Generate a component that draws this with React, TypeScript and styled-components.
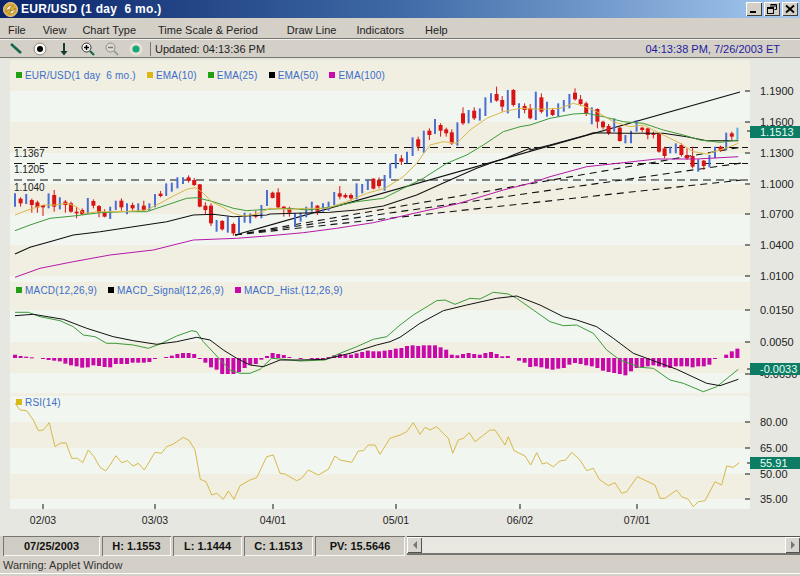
import styled, { createGlobalStyle } from 'styled-components'

const GlobalStyle = createGlobalStyle`
  html, body {
    margin: 0;
    padding: 0;
    background: #d4d0c8;
    overflow: hidden;
  }
`

const Window = styled.div`
  width: 800px;
  height: 576px;
  display: flex;
  flex-direction: column;
  background: #d4d0c8;
  font-family: 'Liberation Sans', Arial, sans-serif;
  overflow: hidden;
`

const TitleBar = styled.div`
  height: 18px;
  flex: none;
  display: flex;
  align-items: center;
  padding: 0 2px 0 3px;
  background: linear-gradient(90deg, #0a246a 0%, #3f6aa6 50%, #a6caf0 100%);
`

const TitleText = styled.div`
  margin-left: 3px;
  color: #fff;
  font-size: 12px;
  font-weight: bold;
  white-space: pre;
  letter-spacing: 0.3px;
  flex: 1;
`

const WinButton = styled.div`
  width: 16px;
  height: 14px;
  margin-left: 2px;
  background: #d4d0c8;
  box-shadow: inset 1px 1px 0 #fff, inset -1px -1px 0 #404040;
  display: flex;
  align-items: center;
  justify-content: center;
`

const MenuBar = styled.div`
  height: 21px;
  flex: none;
  display: flex;
  align-items: center;
  padding: 3px 0 0 8px;
  box-sizing: border-box;
  border-bottom: 1px solid #77756f;
  font-size: 11px;
  color: #222;
`

const MenuItem = styled.span<{ $left: number }>`
  margin-left: ${p => p.$left}px;
  white-space: nowrap;
`

const ToolBar = styled.div`
  height: 19px;
  flex: none;
  box-sizing: border-box;
  display: flex;
  align-items: center;
  border-top: 1px solid #f4f2ec;
  border-bottom: 1px solid #77756f;
  font-size: 11px;
  color: #222;
`

const ToolIcon = styled.div`
  width: 24px;
  height: 16px;
  flex: none;
  display: flex;
  align-items: center;
  justify-content: center;
`

const ToolIcons = styled.div`
  display: flex;
  padding-left: 4px;
`

const ToolSep = styled.div`
  width: 1px;
  height: 14px;
  margin: 0 4px 0 2px;
  background: #77756f;
`

const Clock = styled.div`
  margin-left: auto;
  margin-right: 20px;
  color: #1c1c9e;
  font-size: 11px;
`

const ChartArea = styled.div`
  flex: none;
  height: 478px;
  background: #e7e7e1;
  display: flex;
  flex-direction: column;
`

const Pane = styled.div<{ $h: number }>`
  position: relative;
  height: ${p => p.$h}px;
  flex: none;
  svg {
    display: block;
  }
  text {
    font-family: 'Liberation Sans', Arial, sans-serif;
    font-size: 11px;
    fill: #222;
  }
`

const FibText = styled.text`
  && {
    font-size: 10px;
  }
`

const DateText = styled.text`
  && {
    font-size: 10.5px;
  }
`

const Legend = styled.div<{ $top: number }>`
  position: absolute;
  left: 16px;
  top: ${p => p.$top}px;
  display: flex;
  gap: 11px;
  align-items: center;
  height: 12px;
  font-size: 10px;
  letter-spacing: 0.2px;
  color: #3c6cc8;
  white-space: pre;
`

const LegendItem = styled.span`
  display: flex;
  align-items: center;
  gap: 3px;
`

const Swatch = styled.i<{ $c: string }>`
  display: block;
  width: 6px;
  height: 6px;
  background: ${p => p.$c};
`

const Chip = styled.div<{ $top: number }>`
  position: absolute;
  left: 750px;
  right: 0;
  top: ${p => p.$top}px;
  height: 12px;
  line-height: 12px;
  padding-left: 10px;
  background: #0c7c64;
  color: #e8fff6;
  font-size: 11px;
`

const StatusRow = styled.div`
  height: 20px;
  flex: none;
  display: flex;
  align-items: stretch;
  padding-left: 3px;
`

const StatCell = styled.div<{ $w: number }>`
  width: ${p => p.$w}px;
  box-sizing: border-box;
  margin-right: 2px;
  flex: none;
  display: flex;
  align-items: center;
  justify-content: center;
  font-size: 11px;
  font-weight: bold;
  color: #111;
  background: #cfcdc3;
  box-shadow: inset 1px 1px 0 #77756f, inset -1px -1px 0 #f8f8f4;
`

const ScrollBar = styled.div`
  flex: 1;
  display: flex;
  height: 19px;
  background: #e8e8e0;
  border-top: 1px solid #55534e;
  box-sizing: border-box;
  border-bottom: 2px solid #77756f;
`

const ScrollTrack = styled.div`
  flex: 1;
`

const ScrollButton = styled.div`
  width: 15px;
  flex: none;
  background: #d8d6ce;
  box-shadow: inset 1px 1px 0 #fff, inset -1px -1px 0 #55534e;
  display: flex;
  align-items: center;
  justify-content: center;
`

const WarningBar = styled.div`
  height: 17px;
  flex: none;
  display: flex;
  align-items: center;
  padding-left: 3px;
  font-size: 11px;
  color: #333;
  border-bottom: 1px solid #fff;
`

// points were read off the screenshot at 3x, so every helper takes a crop origin
type P = [number, number]
const crop = (ox: number, oy: number, list: P[]): P[] => list.map(([x, y]) => [ox + x / 3, oy + y / 3])
const toPath = (list: P[]) => list.map(([x, y]) => `${x.toFixed(1)},${y.toFixed(1)}`).join(' ')

const ema10 = [
  ...crop(0, 90, [[45,375],[70,365],[100,355],[130,345],[165,345],[200,340],[230,350],[250,370],[300,365],[370,365],[440,360],[480,340],[520,318],[560,298],[585,293],[605,305],[635,335],[665,350],[700,370],[730,378],[770,372]]),
  ...crop(270, 80, [[0,385],[60,388],[110,385],[170,385],[230,365],[290,340],[345,325],[400,290],[440,250],[480,195],[520,185],[560,190],[600,150],[650,115],[700,95],[750,85]]),
  ...crop(530, 80, [[30,88],[90,85],[130,70],[160,78],[200,95],[250,125],[300,140],[340,135],[380,155],[410,170],[450,190],[490,215],[530,222],[570,210],[600,200],[625,190]]),
]
const ema25 = [
  ...crop(0, 90, [[45,422],[90,405],[150,385],[220,378],[300,368],[370,365],[440,365],[500,345],[560,325],[590,323],[640,335],[700,355],[740,362],[800,358]]),
  ...crop(270, 80, [[60,385],[110,390],[180,382],[260,365],[340,355],[400,325],[460,295],[530,250],[590,225],[640,195],[700,155],[750,140]]),
  ...crop(530, 80, [[0,135],[60,115],[130,102],[170,100],[220,110],[280,125],[340,130],[400,150],[460,165],[510,180],[570,187],[625,180]]),
]
const ema50 = [
  ...crop(0, 90, [[45,492],[90,472],[160,452],[220,435],[300,425],[400,410],[500,395],[580,375],[640,373],[700,380],[800,375]]),
  ...crop(270, 80, [[0,402],[180,397],[260,390],[340,378],[440,345],[540,300],[620,265],[680,243],[710,233],[780,205]]),
  ...crop(530, 80, [[0,210],[60,195],[170,165],[190,158],[280,160],[400,160],[470,170],[530,182],[625,182]]),
]
const ema100 = [
  ...crop(0, 90, [[45,562],[120,535],[220,515],[330,495],[460,480],[580,450],[710,445],[800,438]]),
  ...crop(270, 80, [[100,458],[200,445],[310,428],[440,398],[560,372],[700,330]]),
  ...crop(530, 80, [[0,310],[60,290],[170,260],[280,248],[380,237],[500,237],[625,230]]),
]

const macdLine = [
  ...crop(0, 280, [[45,97],[85,97],[120,110],[180,122],[220,140],[250,165],[285,170],[320,190],[345,190],[400,195],[445,205],[480,192],[530,168],[575,152],[590,155],[610,185],[650,228],[690,270],[720,280],[750,280],[780,268],[815,235],[850,238],[900,243],[975,240],[1020,220],[1070,200],[1120,178],[1160,170]]),
  ...crop(400, 280, [[0,135],[40,105],[110,62],[135,60],[165,73],[210,55],[240,57],[280,37],[325,42],[350,55],[400,90],[450,125],[490,137],[530,135],[580,160],[620,210],[660,240],[720,262],[760,265],[810,300],[850,310],[910,335],[950,320],[1015,268]]),
]
const signalLine = [
  ...crop(0, 280, [[45,107],[100,103],[190,118],[260,145],[340,170],[400,182],[470,193],[530,185],[590,172],[630,180],[670,210],[710,235],[750,255],[790,260],[840,240],[900,240],[975,238],[1050,220],[1130,195],[1170,185]]),
  ...crop(400, 280, [[0,172],[60,130],[130,92],[200,75],[290,55],[350,48],[420,75],[490,110],[530,120],[590,140],[640,175],[700,220],[760,242],[830,268],[920,310],[960,317],[1015,298]]),
]
const rsiLine = [
  ...crop(0, 390, [[45,40],[60,60],[80,62],[100,90],[115,122],[130,120],[148,98],[165,170],[180,160],[198,158],[215,205],[232,205],[248,218],[265,180],[282,200],[300,232],[317,243],[332,222],[348,197],[365,218],[382,212],[399,228],[415,220],[433,240],[465,187],[484,190],[500,170],[520,162],[550,142],[568,152],[585,180],[601,268],[618,275],[635,315],[650,310],[670,328],[685,303],[702,328],[720,287],[750,270],[770,263],[800,200],[820,195],[840,250],[855,252],[890,272],[905,265],[925,240],[955,255],[985,238],[1005,198],[1020,210],[1055,217],[1075,183],[1090,182],[1105,165],[1125,165],[1140,193],[1170,145]]),
  ...crop(400, 390, [[0,135],[20,125],[40,98],[60,133],[75,112],[90,120],[110,110],[145,145],[158,190],[175,150],[190,145],[208,128],[225,155],[270,120],[285,120],[315,165],[325,140],[342,182],[375,198],[392,225],[410,188],[427,222],[440,218],[460,230],[480,213],[497,210],[515,187],[540,210],[560,242],[580,235],[598,268],[625,287],[645,278],[665,310],[680,305],[712,260],[765,285],[780,325],[795,325],[830,300],[845,320],[865,328],[880,350],[895,335],[915,332],[945,275],[965,285],[980,228],[1000,232],[1018,218]]),
]

// one candle: wick top, wick bottom, and body top/bottom when it closed down (red)
type Candle = [number, number, number?, number?]
const firstCandles: Candle[] = [
  [310,350],[322,350,326,340],[312,342],[326,368,330,345],[332,368,337,352],[345,378,345,352],[310,355],[300,365,315,350],[322,358],[330,368,335,345],
  [335,368,340,365],[352,385,365,370],[355,375,360,373],[324,372],[328,355,333,347],[345,382,348,368],[358,382,368,380],[350,387],[332,360],[325,362,332,352],
  [340,373],[338,362,345,355],[340,365],[332,365,347,360],[340,362],[312,352],[303,322,311,318],[280,318],[278,305],[262,295],
  [262,282],[256,278,262,272],[264,288,270,285],[282,352,283,350],[337,372,347,360],[340,408,347,400],[390,425],[390,422,393,418],[380,428],[398,437,402,430],
  [382,430],[368,398],[370,400],[362,385,375,380],[345,385],[300,348],
]
const laterCandles: Candle[] = [
  [335,355,338,354],[325,385,337,382],[378,410,380,385],[380,410,385,398],[400,440],[398,425],[380,412],[365,395],[375,405,377,392],[370,395],
  [365,392],[336,375],[318,358,340,350],[340,355,345,352],[340,362,345,355],[310,358],[312,340],[298,330],[295,328,296,326],[292,325,300,318],
  [285,332],[250,295],[222,265],[225,255,235,245],[215,250],[172,228],[170,212,178,200],[152,218],[145,180,152,165],[117,162],
  [130,170,135,152],[143,170,148,160],[148,195,157,190],[127,197],[82,135,100,130],[90,130],[82,120,92,115],[85,122],[52,108],[40,68],
  [20,65,42,62],[48,95,60,80],[30,100],[27,80,30,75],[70,115],[70,100,78,90],[72,118,85,115],[35,120],
  [40,100,52,95],[65,110],[85,108,90,105],[70,110],[60,95],[42,85],[25,62,38,58],[45,78,58,72],[65,108,70,100],[82,133],
  [85,145,87,125],[122,148,125,142],[132,165,138,160],[115,155],[140,185,143,183],[165,190],[152,190],[120,155],[140,157,143,150],[143,178,145,165],
  [155,175,160,165],[158,218,160,215],[200,235,205,228],[200,220],[190,220],[190,230,195,225],[205,240,225,235],[200,265,228,260],[238,275],[240,270,242,258],
  [225,262],[200,235],[197,215,200,213],[158,210],[155,180,160,170],[143,178],
]
const candles: { x: number; y: (z: number) => number; c: Candle }[] = [
  ...firstCandles.map((c, i) => ({ x: 15 + 5.6 * i, y: (z: number) => 90 + z / 3, c })),
  ...laterCandles.map((c, i) => ({ x: 15 + 5.6 * (i + 46), y: (z: number) => 80 + z / 3, c })),
]

// histogram heights in 3x pixels, one per trading day
const hist = [
  10,6,4,2,0,-3,-6,-8,-10,-17,-22,-25,-29,-28,-22,-24,-27,-28,-18,-18,-18,-14,-14,-14,-12,-2,0,3,7,12,15,15,12,-2,-14,-28,-35,-48,-48,-48,-42,-30,-20,-18,-5,6,15,12,9,3,0,-2,0,-2,-2,-2,3,8,12,10,10,14,18,22,20,20,22,24,28,
  30,36,38,36,38,38,38,32,25,10,8,12,15,12,10,15,18,12,5,6,0,-8,-14,-27,-25,-28,-32,-35,-32,-30,-20,-15,-18,-22,-25,-30,-38,-42,-45,-48,-52,-40,-30,-28,-25,-22,-25,-28,-30,-25,-25,-25,-28,-25,-25,-20,-3,0,10,20,28,
]

const BEIGE = '#f0efe2'
const MINT = '#f1f6f0'

const Band = ({ y, h, c }: { y: number; h: number; c: string }) => <rect x={10} y={y} width={740} height={h} fill={c} />

const AxisLabel = ({ y, t, w = 10 }: { y: number; t: string; w?: number }) => (
  <>
    <line x1={745} x2={745 + w / 2} y1={y} y2={y} stroke="#111" />
    <text x={760} y={y + 4}>{t}</text>
  </>
)

const fanEnds = [147, 163, 180]
const fibLines = [
  { y: 147.5, t: '1.1367', ty: 157 },
  { y: 163.5, t: '1.1205', ty: 173 },
  { y: 180, t: '1.1040', ty: 191 },
]

const PricePane = () => (
  <Pane $h={224}>
    <svg width={800} height={224} viewBox="0 58 800 224">
      <Band y={60} h={31} c={BEIGE} />
      <Band y={91} h={31} c={MINT} />
      <Band y={122} h={31} c={BEIGE} />
      <Band y={153} h={31} c={MINT} />
      <Band y={184} h={30} c={BEIGE} />
      <Band y={214} h={31} c={MINT} />
      <Band y={245} h={31} c={BEIGE} />
      <Band y={276} h={6} c={MINT} />
      {fibLines.map(f => (
        <g key={f.t}>
          <line x1={14} x2={748} y1={f.y} y2={f.y} stroke="#111" strokeWidth={1.1} strokeDasharray="8 5" />
          <FibText x={14} y={f.ty}>{f.t}</FibText>
        </g>
      ))}
      {fanEnds.map(y => (
        <line key={y} x1={235} y1={235} x2={742} y2={y} stroke="#111" strokeWidth={1.1} strokeDasharray="7 5" />
      ))}
      <line x1={235} y1={235} x2={740} y2={92} stroke="#111" strokeWidth={1.1} />
      {candles.map(({ x, y, c }, i) => {
        const down = c[2] !== undefined
        const color = down ? '#d81414' : i === 129 ? '#58b0e0' : '#4c6ed4'
        return (
          <g key={i}>
            <line x1={x} x2={x} y1={y(c[0])} y2={y(c[1])} stroke={color} strokeWidth={down ? 1 : 2} />
            {down && <rect x={x - 2} y={y(c[2]!)} width={4} height={y(c[3]!) - y(c[2]!)} fill={color} />}
          </g>
        )
      })}
      <polyline points={toPath(ema100)} fill="none" stroke="#b818a8" strokeWidth={1} />
      <polyline points={toPath(ema50)} fill="none" stroke="#111" strokeWidth={1.1} />
      <polyline points={toPath(ema25)} fill="none" stroke="#3f9a3a" strokeWidth={1} />
      <polyline points={toPath(ema10)} fill="none" stroke="#d8b848" strokeWidth={1} />
      <AxisLabel y={91} t="1.1900" />
      <AxisLabel y={122} t="1.1600" />
      <AxisLabel y={153} t="1.1300" />
      <AxisLabel y={184} t="1.1000" />
      <AxisLabel y={214} t="1.0700" />
      <AxisLabel y={245} t="1.0400" />
      <AxisLabel y={276} t="1.0100" />
      <line x1={747} x2={750} y1={131} y2={131} stroke="#111" />
    </svg>
    <Legend $top={11}>
      <LegendItem><Swatch $c="#22a012" />{'EUR/USD(1 day  6 mo.)'}</LegendItem>
      <LegendItem><Swatch $c="#d8b818" />EMA(10)</LegendItem>
      <LegendItem><Swatch $c="#22a012" />EMA(25)</LegendItem>
      <LegendItem><Swatch $c="#000" />EMA(50)</LegendItem>
      <LegendItem><Swatch $c="#c808a8" />EMA(100)</LegendItem>
    </Legend>
    <Chip $top={68}>1.1513</Chip>
  </Pane>
)

const MacdPane = () => (
  <Pane $h={114}>
    <svg width={800} height={114} viewBox="0 282 800 114">
      <Band y={282} h={28} c={BEIGE} />
      <Band y={310} h={32} c={MINT} />
      <Band y={342} h={31} c={BEIGE} />
      <Band y={373} h={20} c={MINT} />
      <Band y={393} h={3} c={BEIGE} />
      {hist.map((v, i) => {
        const h = Math.abs(v) / 3
        const x = 13 + 5.6 * i
        if (h === 0) return null
        return <rect key={i} x={x} width={4} y={v > 0 ? 358 - h : 358} height={Math.max(h, 1)} fill="#c808a8" />
      })}
      <polyline points={toPath(macdLine)} fill="none" stroke="#3f9a3a" strokeWidth={1} />
      <polyline points={toPath(signalLine)} fill="none" stroke="#111" strokeWidth={1} />
      <AxisLabel y={310} t="0.0150" />
      <AxisLabel y={342} t="0.0050" />
      <AxisLabel y={374} t="-0.0050" />
      <line x1={747} x2={750} y1={369} y2={369} stroke="#111" />
    </svg>
    <Legend $top={2}>
      <LegendItem><Swatch $c="#22a012" />{'MACD(12,26,9)'}</LegendItem>
      <LegendItem><Swatch $c="#000" />{'MACD_Signal(12,26,9)'}</LegendItem>
      <LegendItem><Swatch $c="#c808a8" />{'MACD_Hist.(12,26,9)'}</LegendItem>
    </Legend>
    <Chip $top={81}>-0.0033</Chip>
  </Pane>
)

const dateTicks: [number, string][] = [[43, '02/03'], [155, '03/03'], [273, '04/01'], [396, '05/01'], [520, '06/02'], [637, '07/01']]

const RsiPane = () => (
  <Pane $h={140}>
    <svg width={800} height={140} viewBox="0 396 800 140">
      <Band y={396} h={26} c={MINT} />
      <Band y={422} h={26} c={BEIGE} />
      <Band y={448} h={26} c={MINT} />
      <Band y={474} h={25} c={BEIGE} />
      <Band y={499} h={10} c={MINT} />
      <polyline points={toPath(rsiLine)} fill="none" stroke="#d8b848" strokeWidth={1} />
      {dateTicks.map(([x, t]) => (
        <g key={t}>
          <line x1={x} x2={x} y1={504} y2={509} stroke="#111" />
          <DateText x={x} y={524} textAnchor="middle">{t}</DateText>
        </g>
      ))}
      <AxisLabel y={422} t="80.00" />
      <AxisLabel y={448} t="65.00" />
      <AxisLabel y={474} t="50.00" />
      <AxisLabel y={499} t="35.00" />
      <line x1={747} x2={750} y1={463} y2={463} stroke="#111" />
    </svg>
    <Legend $top={0}>
      <LegendItem><Swatch $c="#d8b818" />RSI(14)</LegendItem>
    </Legend>
    <Chip $top={61}>55.91</Chip>
  </Pane>
)

function App() {
  return (
    <Window>
      <GlobalStyle />
      <TitleBar>
        <svg width={15} height={15} viewBox="0 0 15 15">
          <circle cx={7.5} cy={7.5} r={7} fill="#d8a838" stroke="#f0d890" />
          <path d="M3 9.5 C3 5 7 3 10.5 4 C8 4.5 6.5 6 7 7.5 C8 10 11.5 8.5 12 6 C12.5 10.5 8.5 12.5 5.5 11.5 C7.5 11 8.5 9.5 7.5 8.2 C6.5 7 4 7.5 3 9.5 Z" fill="#fff6d8" stroke="#7a5a10" strokeWidth={0.5} />
        </svg>
        <TitleText>{'EUR/USD (1 day  6 mo.)'}</TitleText>
        <WinButton>
          <svg width={10} height={10} viewBox="0 0 10 10"><rect x={1} y={7} width={6} height={2} fill="#000" /></svg>
        </WinButton>
        <WinButton>
          <svg width={10} height={10} viewBox="0 0 10 10">
            <path d="M3.5 0.5h6v5h-2M3 2h6" fill="none" stroke="#000" />
            <rect x={0.5} y={3.5} width={6} height={6} fill="#d4d0c8" stroke="#000" />
            <line x1={0} x2={7} y1={4.5} y2={4.5} stroke="#000" />
          </svg>
        </WinButton>
        <WinButton>
          <svg width={10} height={10} viewBox="0 0 10 10"><path d="M1 1.5L9 8.5M9 1.5L1 8.5" stroke="#000" strokeWidth={1.8} /></svg>
        </WinButton>
      </TitleBar>
      <MenuBar>
        <MenuItem $left={0}>File</MenuItem>
        <MenuItem $left={17}>View</MenuItem>
        <MenuItem $left={16}>Chart Type</MenuItem>
        <MenuItem $left={22}>Time Scale &amp; Period</MenuItem>
        <MenuItem $left={29}>Draw Line</MenuItem>
        <MenuItem $left={20}>Indicators</MenuItem>
        <MenuItem $left={21}>Help</MenuItem>
      </MenuBar>
      <ToolBar>
        <ToolIcons>
          <ToolIcon>
            <svg width={14} height={12} viewBox="0 0 14 12"><path d="M2 1L12 10" stroke="#14684e" strokeWidth={2.6} /></svg>
          </ToolIcon>
          <ToolIcon>
            <svg width={14} height={14} viewBox="0 0 14 14">
              <circle cx={7} cy={7} r={6} fill="#f8f8f4" stroke="#8a8a80" />
              <circle cx={7} cy={7} r={3} fill="#000" />
            </svg>
          </ToolIcon>
          <ToolIcon>
            <svg width={12} height={14} viewBox="0 0 12 14"><path d="M6 1V11" stroke="#123c30" strokeWidth={2} /><path d="M2.5 9H9.5L6 13.5Z" fill="#123c30" /></svg>
          </ToolIcon>
          <ToolIcon>
            <svg width={14} height={14} viewBox="0 0 14 14">
              <circle cx={5.5} cy={5.5} r={4.5} fill="#f4f4f0" stroke="#333" />
              <path d="M3 5.5H8M5.5 3V8" stroke="#000" strokeWidth={1.4} />
              <path d="M9 9L13 13" stroke="#14684e" strokeWidth={2.2} />
            </svg>
          </ToolIcon>
          <ToolIcon>
            <svg width={14} height={14} viewBox="0 0 14 14">
              <circle cx={5.5} cy={5.5} r={4.5} fill="#dcdad2" stroke="#8e8e88" />
              <path d="M3 5.5H8" stroke="#77776f" strokeWidth={1.4} />
              <path d="M9 9L13 13" stroke="#94a49c" strokeWidth={2.2} />
            </svg>
          </ToolIcon>
          <ToolIcon>
            <svg width={14} height={14} viewBox="0 0 14 14">
              <circle cx={7} cy={7} r={6.5} fill="#e8e2d8" />
              <circle cx={7} cy={7} r={3.6} fill="#18a878" />
            </svg>
          </ToolIcon>
        </ToolIcons>
        <ToolSep />
        Updated: 04:13:36 PM
        <Clock>04:13:38 PM, 7/26/2003 ET</Clock>
      </ToolBar>
      <ChartArea>
        <PricePane />
        <MacdPane />
        <RsiPane />
      </ChartArea>
      <StatusRow>
        <StatCell $w={97}>07/25/2003</StatCell>
        <StatCell $w={69}>H: 1.1553</StatCell>
        <StatCell $w={69}>L: 1.1444</StatCell>
        <StatCell $w={69}>C: 1.1513</StatCell>
        <StatCell $w={90}>PV: 15.5646</StatCell>
        <ScrollBar>
          <ScrollButton>
            <svg width={6} height={8} viewBox="0 0 6 8"><path d="M5 0V8L1 4Z" fill="#777" /></svg>
          </ScrollButton>
          <ScrollTrack />
          <ScrollButton>
            <svg width={6} height={8} viewBox="0 0 6 8"><path d="M1 0V8L5 4Z" fill="#777" /></svg>
          </ScrollButton>
        </ScrollBar>
      </StatusRow>
      <WarningBar>Warning: Applet Window</WarningBar>
    </Window>
  )
}

export default App
